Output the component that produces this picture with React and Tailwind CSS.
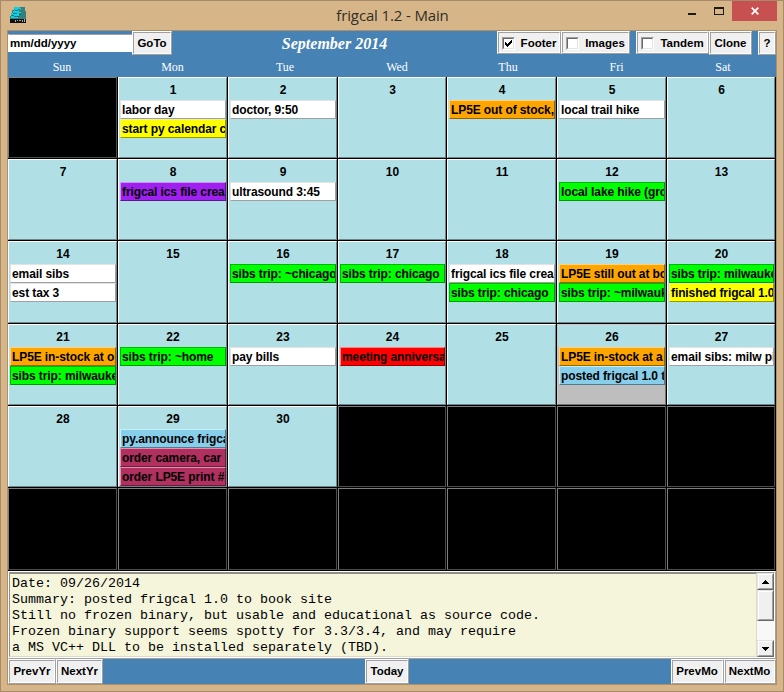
import React from "react";

const W = "bg-white border-t-[#e3e3e3] border-l-[#e3e3e3] border-r-[#a0a0a0] border-b-[#a0a0a0]";
const Y = "bg-[#ffff00] border-t-[#f2f28c] border-l-[#f2f28c] border-r-[#999900] border-b-[#999900]";
const G = "bg-[#00ff00] border-t-[#00b800] border-l-[#00b800] border-r-[#009900] border-b-[#009900]";
const O = "bg-[#ffa500] border-t-[#ffd280] border-l-[#ffd280] border-r-[#996300] border-b-[#996300]";
const P = "bg-[#a020f0] border-t-[#cf90ff] border-l-[#cf90ff] border-r-[#601390] border-b-[#601390]";
const R = "bg-[#ff0000] border-t-[#ff8080] border-l-[#ff8080] border-r-[#990000] border-b-[#990000]";
const B = "bg-[#87ceeb] border-t-[#c3f0ff] border-l-[#c3f0ff] border-r-[#517c8d] border-b-[#517c8d]";
const M = "bg-[#b03060] border-t-[#e890b0] border-l-[#e890b0] border-r-[#6a1d3a] border-b-[#6a1d3a]";

const events = {
  1: [["labor day", W], ["start py calendar c", Y]],
  2: [["doctor, 9:50", W]],
  4: [["LP5E out of stock,", O]],
  5: [["local trail hike", W]],
  8: [["frigcal ics file crea", P]],
  9: [["ultrasound 3:45", W]],
  12: [["local lake hike (gro", G]],
  14: [["email sibs", W], ["est tax 3", W]],
  16: [["sibs trip: ~chicago", G]],
  17: [["sibs trip: chicago", G]],
  18: [["frigcal ics file crea", W], ["sibs trip: chicago", G]],
  19: [["LP5E still out at bo", O], ["sibs trip: ~milwauk", G]],
  20: [["sibs trip: milwauke", G], ["finished frigcal 1.0", Y]],
  21: [["LP5E in-stock at o", O], ["sibs trip: milwauke", G]],
  22: [["sibs trip: ~home", G]],
  23: [["pay bills", W]],
  24: [["meeting anniversa", R]],
  26: [["LP5E in-stock at a", O], ["posted frigcal 1.0 t", B]],
  27: [["email sibs: milw pi", W]],
  29: [["py.announce frigca", B], ["order camera, car", M], ["order LP5E print #", M]],
};

function Day({ n }) {
  const blank = n < 1 || n > 30;
  const tone = blank
    ? "bg-black border-t-[#7f7f7f] border-l-[#7f7f7f] border-r-[#4c4c4c] border-b-[#4c4c4c]"
    : n === 26
      ? "bg-[#bebebe] border-t-[#d0c8c8] border-l-[#d0c8c8] border-r-[#727272] border-b-[#727272]"
      : "bg-[#b0e0e6] border-t-white border-l-white border-r-[#6a868a] border-b-[#6a868a]";
  return (
    <div className="min-h-0 min-w-0 border-r border-b border-black bg-black">
      <div className={`h-full overflow-hidden border px-px ${tone}`}>
        {!blank && (
          <>
            <div className={`-mx-px h-[22px] pt-[4px] pl-px text-center leading-[16px] ${n === 26 ? "bg-[#b0e0e6]" : ""}`}>{n}</div>
            <div className="-mr-px">
              {(events[n] || []).map(([t, c], i) => (
                <div key={i} className={`h-[19px] overflow-hidden border pl-px leading-[18px] tracking-[-0.1px] whitespace-nowrap ${c}`}>{t}</div>
              ))}
            </div>
          </>
        )}
      </div>
    </div>
  );
}

function Btn({ className = "", inner = "", children }) {
  return (
    <div className={`shrink-0 border border-t-white border-l-white border-r-[#a0a0a0] border-b-[#a0a0a0] ${className}`}>
      <div className={`flex h-full items-center justify-center border border-t-[#a0a0a0] border-l-[#a0a0a0] border-r-white border-b-white bg-[#f0f0f0] whitespace-nowrap ${inner}`}>
        {children}
      </div>
    </div>
  );
}

function Check({ on, label, className }) {
  return (
    <Btn className={className} inner="pt-[2px]">
      <span className="mr-[6px] flex size-[13px] shrink-0 border border-t-[#a0a0a0] border-l-[#a0a0a0] border-r-white border-b-white">
        <span className="flex size-[11px] border border-t-[#696969] border-l-[#696969] border-r-[#e3e3e3] border-b-[#e3e3e3] bg-white">
          {on && (
            <svg viewBox="0 0 9 9" className="size-[9px]" shapeRendering="crispEdges">
              <path d="M1 3h1v1h1v1h1v-1h1v-1h1v-1h1v-1h1v3h-1v1h-1v1h-1v1h-1v1h-1v-1h-1v-1h-1z" />
            </svg>
          )}
        </span>
      </span>
      {label}
    </Btn>
  );
}

function Arrow({ down }) {
  return (
    <div className="flex h-[17px] w-[17px] shrink-0 items-center justify-center border border-t-[#e3e3e3] border-l-[#e3e3e3] border-r-[#696969] border-b-[#696969] bg-[#f0f0f0]">
      <div className="flex size-[15px] items-center justify-center border border-t-white border-l-white border-r-[#a0a0a0] border-b-[#a0a0a0]">
        <svg viewBox="0 0 7 4" className="h-[4px] w-[7px]" shapeRendering="crispEdges">
          <path d={down ? "M0 0h7v1h-1v1h-1v1h-1v1h-1v-1h-1v-1h-1v-1h-1z" : "M3 0h1v1h1v1h1v1h1v1h-7v-1h1v-1h1v-1h1z"} />
        </svg>
      </div>
    </div>
  );
}

export default function App() {
  return (
    <div className="flex h-[692px] w-[784px] flex-col overflow-hidden border border-[#a58b69] bg-[#d6b688] font-['Liberation_Sans',Arial,sans-serif] text-[12px] font-bold text-black">
      <div className="flex h-[29px] shrink-0">
        <div className="w-[90px] pt-[6px] pl-[9px]">
          <svg width="16" height="16" viewBox="0 0 16 16" shapeRendering="crispEdges">
            <path d="M4 0h11v4h1v8H0V9h1V6h1V3h2z" fill="#39807c" />
            <path d="M4 0h6v1h1v2H9v2h2v1H9v3H8v2H1V9h1V8H1V6h2V4h1V3h1V2H4z" fill="#10cfe0" />
            <path d="M5 3h3v1H5zM3 6h4v1H3zM8 2h2v1H8zM4 9h5v1H4zM9 7h2v1H9zM2 8h2v1H2z" fill="#06758c" />
            <path d="M0 12h16v4H0z" fill="#101010" />
            <path d="M5 13h1v2H5zM7 13h1v1H7zM9 13h2v1H9zM12 13h1v2h-1zM14 12h1v3h-1z" fill="#aaa" />
          </svg>
        </div>
        <div className="w-[601px] pt-[2px] pl-[2px] text-center font-['Open_Sans',sans-serif] text-[15px] leading-[24px] font-normal tracking-[-0.14px] text-[#332d25]">frigcal 1.2 - Main</div>
        <div className="flex items-start">
          <svg width="40" height="20" viewBox="692 0 40 20" className="-ml-[4px]" shapeRendering="crispEdges">
            <path d="M692 12h8v2h-8z" fill="#1c1a17" />
            <path d="M718 6h10v8h-10zM719 8v5h8v-5z" fillRule="evenodd" fill="#1c1a17" />
          </svg>
          <div className="ml-[4px] flex h-[20px] w-[45px] items-center justify-center bg-[#c75050]">
            <svg width="8" height="8" viewBox="0 0 8 8"><path d="M.7 .7l6.6 6.6M7.3 .7l-6.6 6.6" stroke="#fff" strokeWidth="1.7" /></svg>
          </div>
        </div>
      </div>
      <div className="ml-[6px] flex h-[655px] w-[770px] shrink-0 flex-col border border-[#ab906c] bg-[#4682b4]">
        <div className="flex h-[25px] shrink-0 items-start text-[11.5px]">
          <div className="mt-[3px] h-[18px] w-[124px] shrink-0 border-t border-l border-t-[#a0a0a0] border-l-white bg-white pl-px leading-[17px]">mm/dd/yyyy</div>
          <Btn className="h-[24px] w-[40px]" inner="pt-px">GoTo</Btn>
          <div className="w-[325px] text-center font-['Liberation_Serif',serif] text-[16px] leading-[26px] text-white italic">September 2014</div>
          <Check on label="Footer" className="h-[23px] w-[64px]" />
          <Check label="Images" className="h-[23px] w-[69px]" />
          <Check label="Tandem" className="ml-[6px] h-[23px] w-[73px]" />
          <Btn className="h-[24px] w-[43px]" inner="pt-px">Clone</Btn>
          <Btn className="ml-[6px] h-[24px] w-[18px]" inner="pt-px">?</Btn>
        </div>
        <div className="grid h-[21px] shrink-0 grid-cols-[108px_113px_112px_112px_110px_107px_106px] text-center font-['Liberation_Serif',serif] text-[12px] leading-[22px] font-normal text-white">
          {["Sun", "Mon", "Tue", "Wed", "Thu", "Fri", "Sat"].map((d) => <div key={d}>{d}</div>)}
        </div>
        <div className="grid h-[494px] shrink-0 grid-cols-[110px_110px_110px_109px_110px_110px_109px] grid-rows-[82px_82px_83px_82px_82px_83px]">
          {Array.from({ length: 42 }, (_, i) => <Day key={i} n={i} />)}
        </div>
        <div className="flex h-[88px] shrink-0 border border-white border-r-[#a0a0a0] border-b-[#a0a0a0] bg-white pb-px">
          <div className="min-w-0 flex-1 border-t-2 border-l border-b border-r border-t-[#8f8f88] border-l-[#8f8f88] border-r-[#dcdcc6] border-b-[#dcdcc6] bg-[#f5f5dc] pt-[2px] pl-[2px] font-['Liberation_Mono',monospace] text-[13.33px] leading-[16px] font-normal whitespace-pre">
            {`Date: 09/26/2014
Summary: posted frigcal 1.0 to book site
Still no frozen binary, but usable and educational as source code.
Frozen binary support seems spotty for 3.3/3.4, and may require
a MS VC++ DLL to be installed separately (TBD).`}
          </div>
          <div className="flex w-[18px] shrink-0 flex-col border-t border-r border-t-[#a0a0a0] border-r-white bg-[#f8f8f8]">
            <Arrow />
            <div className="h-[31px] border border-t-[#e3e3e3] border-l-[#e3e3e3] border-r-[#696969] border-b-[#696969]">
              <div className="h-full border border-t-white border-l-white border-r-[#a0a0a0] border-b-[#a0a0a0] bg-[#f0f0f0]" />
            </div>
            <div className="flex-1" />
            <Arrow down />
          </div>
        </div>
        <div className="flex h-[25px] shrink-0 justify-between text-[11.5px]">
          <div className="flex w-[357px]"><Btn className="w-[48px]">PrevYr</Btn><Btn className="w-[47px]">NextYr</Btn></div>
          <Btn className="w-[44px]">Today</Btn>
          <div className="flex flex-1 justify-end"><Btn className="w-[53px]" inner="pr-px">PrevMo</Btn><Btn className="w-[52px]" inner="pr-px">NextMo</Btn></div>
        </div>
      </div>
    </div>
  );
}
